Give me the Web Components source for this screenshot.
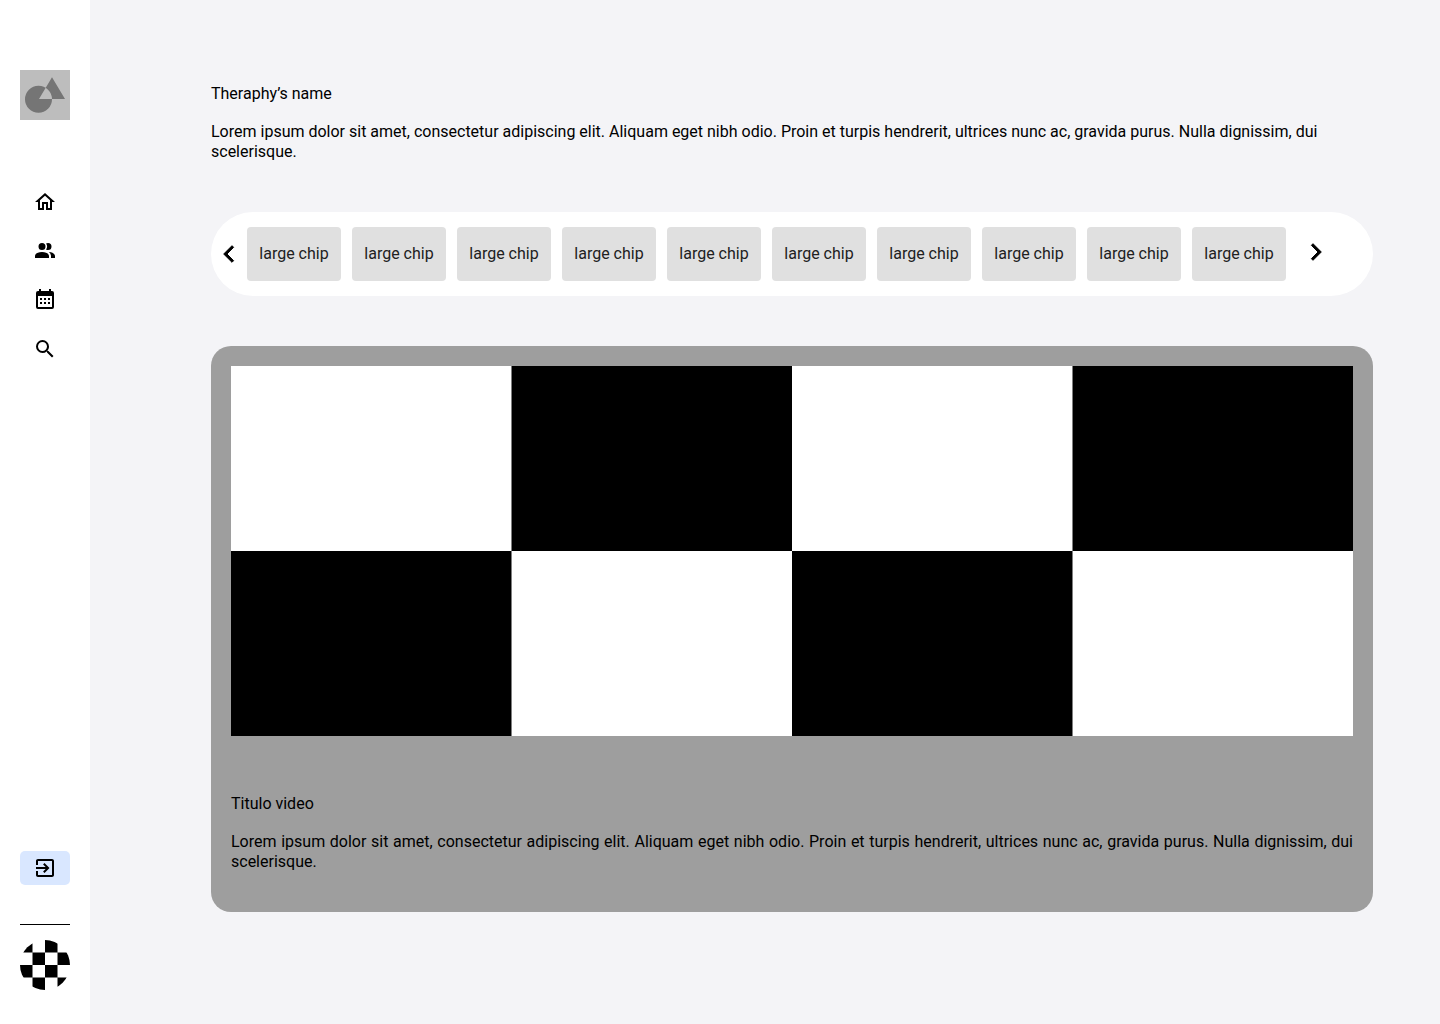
<!DOCTYPE html>
<html lang="en">
<head>
<meta charset="utf-8">
<meta name="viewport" content="width=device-width, initial-scale=1">
<title>Theraphy</title>
<style>
  body { margin: 0; background: #f4f4f7; color: #000; font: 16px/20px Roboto, sans-serif; }
</style>
</head>
<body>
<therapy-page></therapy-page>
<script>
const define = (name, html, setup) => {
  const template = document.createElement('template');
  template.innerHTML = html;
  customElements.define(name, class extends HTMLElement {
    constructor() {
      super();
      this.attachShadow({ mode: 'open' }).append(template.content.cloneNode(true));
    }
    connectedCallback() { if (setup) setup(this, this.shadowRoot); }
  });
};

const icons = {
  home: 'M12 5.69l5 4.5V18h-2v-6H9v6H7v-7.81l5-4.5M12 3L2 12h3v8h6v-6h2v6h6v-8h3L12 3z',
  people: 'M16 17v2H2v-2s0-4 7-4 7 4 7 4M12.5 7.5A3.5 3.5 0 1 0 9 11a3.5 3.5 0 0 0 3.5-3.5M15.94 13A5.32 5.32 0 0 1 18 17v2h4v-2s0-3.63-6.06-4M15 4a3.39 3.39 0 0 0-1.93.59 5 5 0 0 1 0 5.82A3.39 3.39 0 0 0 15 11a3.5 3.5 0 0 0 0-7z',
  calendar: 'M9 10v2H7v-2h2m4 0v2h-2v-2h2m4 0v2h-2v-2h2m2-7a2 2 0 0 1 2 2v14a2 2 0 0 1-2 2H5a2 2 0 0 1-2-2V5a2 2 0 0 1 2-2h1V1h2v2h8V1h2v2h1m0 16V8H5v11h14M9 14v2H7v-2h2m4 0v2h-2v-2h2m4 0v2h-2v-2h2z',
  search: 'M9.5 3A6.5 6.5 0 0 1 16 9.5c0 1.61-.59 3.09-1.56 4.23l.27.27h.79l5 5-1.5 1.5-5-5v-.79l-.27-.27A6.516 6.516 0 0 1 9.5 16a6.5 6.5 0 0 1 0-13m0 2C7 5 5 7 5 9.5S7 14 9.5 14 14 12 14 9.5 12 5 9.5 5z',
  exit: 'M10.09 15.59L11.5 17l5-5-5-5-1.41 1.41L12.67 11H3v2h9.67l-2.58 2.59zM19 3H5c-1.11 0-2 .9-2 2v4h2V5h14v14H5v-4H3v4c0 1.1.89 2 2 2h14c1.1 0 2-.9 2-2V5c0-1.1-.9-2-2-2z'
};

define('app-icon', `
  <style>:host { display: block; width: 24px; height: 24px; } svg { display: block; }</style>
  <svg width="24" height="24" viewBox="0 0 24 24" fill="currentColor" aria-hidden="true"><path/></svg>`,
  (el, root) => root.querySelector('path').setAttribute('d', icons[el.getAttribute('name')]));

define('checker-board', `
  <style>:host { display: block; overflow: hidden; } svg { display: block; width: 100%; height: 100%; }</style>
  <svg preserveAspectRatio="none" aria-hidden="true"><rect width="100%" height="100%" fill="#fff"/><path/></svg>`,
  (el, root) => {
    const cols = 4, rows = Number(el.getAttribute('rows')), first = Number(el.getAttribute('first'));
    let d = '';
    for (let r = 0; r < rows; r++)
      for (let c = 0; c < cols; c++)
        if ((r + c) % 2 === first) d += `M${c} ${r}h1v1h-1z`;
    root.querySelector('svg').setAttribute('viewBox', `0 0 ${cols} ${rows}`);
    root.querySelector('path').setAttribute('d', d);
  });

define('side-bar', `
  <style>
    :host { display: flex; flex-direction: column; align-items: center; box-sizing: border-box;
      flex: none; width: 90px; padding: 70px 20px 34px; background: #fff; }
    .logo { display: block; }
    nav { display: flex; flex-direction: column; gap: 25px; margin-top: 70px; }
    a { display: block; color: #000; }
    .exit { display: flex; align-items: center; justify-content: center; width: 50px; height: 34px;
      margin-top: auto; padding: 0; border: 0; border-radius: 5px; background: #d9e7ff; color: #000; }
    hr { width: 100%; height: 1px; margin: 39px 0 15px; border: 0; background: #000; }
    checker-board { width: 50px; height: 50px; border-radius: 50%; }
  </style>
  <svg class="logo" width="50" height="50" viewBox="0 0 50 50" role="img" aria-label="Logo">
    <rect width="50" height="50" fill="#bdbdbd"/>
    <path fill="#757575" fill-rule="evenodd" d="M18.5 15.8a13.5 13.5 0 1 0 0 27 13.5 13.5 0 0 0 0-27zM32 7.2L45 29H19z"/>
  </svg>
  <nav aria-label="Main">
    <a href="#home" aria-label="Home"><app-icon name="home"></app-icon></a>
    <a href="#people" aria-label="People"><app-icon name="people"></app-icon></a>
    <a href="#calendar" aria-label="Calendar"><app-icon name="calendar"></app-icon></a>
    <a href="#search" aria-label="Search"><app-icon name="search"></app-icon></a>
  </nav>
  <button class="exit" aria-label="Log out"><app-icon name="exit"></app-icon></button>
  <hr>
  <checker-board rows="4" first="0"></checker-board>`);

define('text-block', `
  <style>
    :host { display: block; }
    h2, p { margin: 0; font: inherit; }
    p { margin-top: 18px; }
    :host([justified]) p { text-align: justify; }
  </style>
  <h2><slot name="title"></slot></h2>
  <p><slot></slot></p>`);

define('large-chip', `
  <style>
    :host { display: block; flex: none; }
    button { display: block; min-width: 94px; height: 54px; padding: 0 12px; border: 0; border-radius: 4px;
      background: #e0e0e0; color: #212121; font: inherit; }
  </style>
  <button><slot></slot></button>`);

define('chip-carousel', `
  <style>
    :host { display: flex; align-items: center; box-sizing: border-box; padding: 15px 49px 15px 11px;
      border-radius: 42px; background: #fff; }
    .chips { display: flex; gap: 11px; min-width: 0; overflow: hidden; margin: 0 23px 0 11px; }
    .arrow { flex: none; padding: 0; border: 0; background: none; color: #000; }
    .next { margin-bottom: 4px; }
    svg { display: block; fill: currentColor; stroke: currentColor; stroke-width: 1; stroke-linejoin: round; }
  </style>
  <button class="arrow" aria-label="Previous"><svg width="14" height="20" viewBox="0 0 14 20"><path d="M10 1.7L11.6 3.3 5 10l6.6 6.7L10 18.3 1.7 10z"/></svg></button>
  <div class="chips"><slot></slot></div>
  <button class="arrow next" aria-label="Next"><svg width="14" height="20" viewBox="0 0 14 20"><path d="M4 1.7L2.4 3.3 9 10l-6.6 6.7L4 18.3l8.3-8.3z"/></svg></button>`);

define('video-card', `
  <style>
    :host { display: block; padding: 20px 20px 40px; border-radius: 20px; background: #9e9e9e; }
    checker-board { height: 370px; margin-bottom: 58px; }
  </style>
  <checker-board rows="2" first="1"></checker-board>
  <slot></slot>`);

define('therapy-page', `
  <style>
    :host { display: flex; min-height: 100vh; }
    main { flex: 1; min-width: 0; padding: 84px 67px 84px 121px; }
    chip-carousel { margin: 50px 0; }
  </style>
  <side-bar></side-bar>
  <main>
    <text-block>
      <span slot="title">Theraphy’s name</span>Lorem ipsum dolor sit amet, consectetur adipiscing elit. Aliquam eget nibh odio. Proin et turpis hendrerit, ultrices nunc ac, gravida purus. Nulla dignissim, dui scelerisque.
    </text-block>
    <chip-carousel>${'<large-chip>large chip</large-chip>'.repeat(10)}</chip-carousel>
    <video-card>
      <text-block justified>
        <span slot="title">Titulo video</span>Lorem ipsum dolor sit amet, consectetur adipiscing elit. Aliquam eget nibh odio. Proin et turpis hendrerit, ultrices nunc ac, gravida purus. Nulla dignissim, dui scelerisque.
      </text-block>
    </video-card>
  </main>`);
</script>
</body>
</html>
